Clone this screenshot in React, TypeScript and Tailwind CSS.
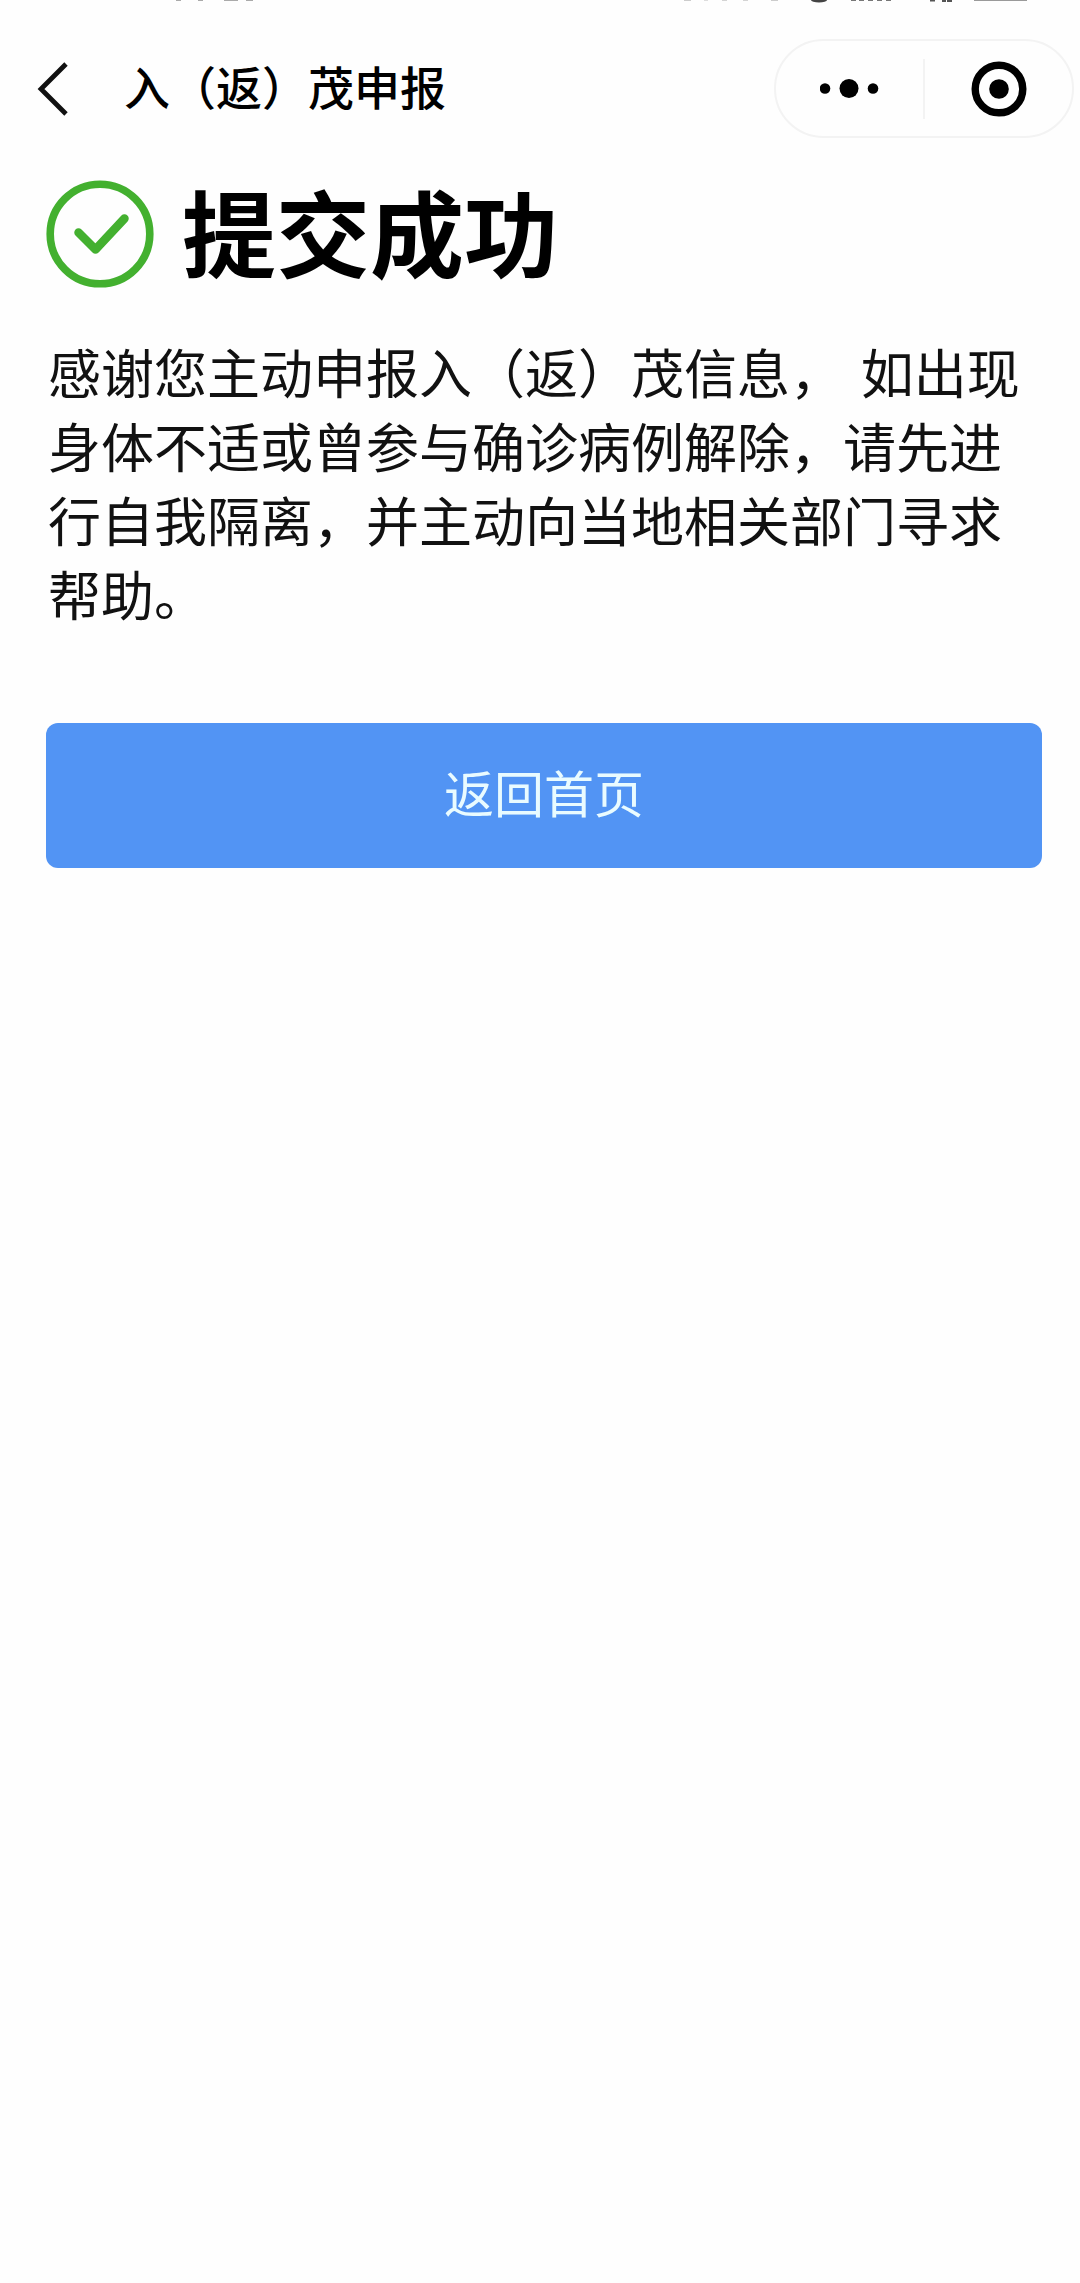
function StatusBarEdge() {
  return (
    <div className="flex h-[3px] items-start justify-between pl-[170px] pr-[50px]" aria-hidden="true">
      <svg width="90" height="3" viewBox="0 0 90 3" fill="#aaaaaa">
        <rect x="6" width="5" height="1" />
        <rect x="28" width="5" height="1" />
        <rect x="54" width="14" height="1" />
        <rect x="76" width="7" height="1" />
      </svg>
      <svg width="360" height="3" viewBox="0 0 360 3" fill="#9a9a9a">
        <rect x="14" width="7" height="1" fill="#cccccc" />
        <rect x="34" width="4" height="1" fill="#dddddd" />
        <rect x="52" width="5" height="1" fill="#d4d4d4" />
        <rect x="73" width="5" height="1" fill="#d4d4d4" />
        <rect x="101" width="7" height="1" fill="#cccccc" />
        <ellipse cx="149" cy="0" rx="8" ry="2.5" fill="#444444" />
        <path d="M181 0h5v1h-5zM189 0h5v1h-5zM198 0h5v1h-5zM207 0h5v1h-5zM216 0h5v1h-5z" fill="#777777" />
        <path d="M260 0h5v1.5h-5zM272 0h4v2h-4zM277 0h5v2h-5z" fill="#555555" />
        <rect x="304" width="53" height="1" />
      </svg>
    </div>
  );
}

export default function App() {
  return (
    <div className="min-h-screen bg-[#fefefe] font-['Noto_Sans_CJK_SC',sans-serif] text-black">
      <StatusBarEdge />
      <header className="mt-9 flex items-center pl-9 pr-[6px]">
        <button type="button" aria-label="返回" className="shrink-0">
          <svg width="36" height="56" viewBox="0 0 36 56" fill="none" stroke="#111" strokeWidth="4.8">
            <path d="M30 3 5 28 30 53" />
          </svg>
        </button>
        <h1 className="ml-[52px] flex-1 whitespace-nowrap pb-2 text-[46px] font-medium leading-[64px]">入（返）茂申报</h1>
        <div className="flex h-[99px] w-[300px] shrink-0 items-center rounded-full border-2 border-[#f3f3f3]">
          <button type="button" aria-label="更多" className="flex h-full flex-1 items-center justify-center">
            <svg width="60" height="20" viewBox="0 0 60 20" fill="#000">
              <circle cx="5" cy="9.5" r="5.3" />
              <circle cx="29" cy="9.5" r="9.5" />
              <circle cx="53" cy="9.5" r="5.3" />
            </svg>
          </button>
          <div className="h-[60px] w-[2px] bg-[#f3f3f3]" />
          <button type="button" aria-label="关闭" className="flex h-full flex-1 items-center justify-center">
            <svg width="56" height="56" viewBox="0 0 56 56">
              <circle cx="28" cy="28" r="23.8" fill="none" stroke="#000" strokeWidth="7.4" />
              <circle cx="28" cy="28" r="9.8" fill="#000" />
            </svg>
          </button>
        </div>
      </header>

      <main className="pl-[46px] pr-[38px] pt-[33px]">
        <div className="flex items-center gap-7">
          <svg className="my-[9px] shrink-0" width="108" height="108" viewBox="0 0 108 108" fill="none" stroke="#43b02f">
            <circle cx="54" cy="54" r="49.8" strokeWidth="7.6" />
            <path d="M32.5 52.5 49.5 69.5 78.5 38.5" strokeWidth="8.5" strokeLinecap="round" strokeLinejoin="round" />
          </svg>
          <h2 className="whitespace-nowrap pb-2 text-[94px] font-bold leading-[112px]">提交成功</h2>
        </div>
        <p className="mt-[37px] pl-[2px] text-[53px] leading-[74px] text-[#111]">
          感谢您主动申报入（返）茂信息，&#8196;如出现身体不适或曾参与确诊病例解除，请先进行自我隔离，并主动向当地相关部门寻求帮助。
        </p>
        <button
          type="button"
          className="mt-[93px] block h-[145px] w-full rounded-[12px] bg-[#5294f4] pb-2 text-[50px] text-[#e9fbff]"
        >
          返回首页
        </button>
      </main>
    </div>
  );
}
